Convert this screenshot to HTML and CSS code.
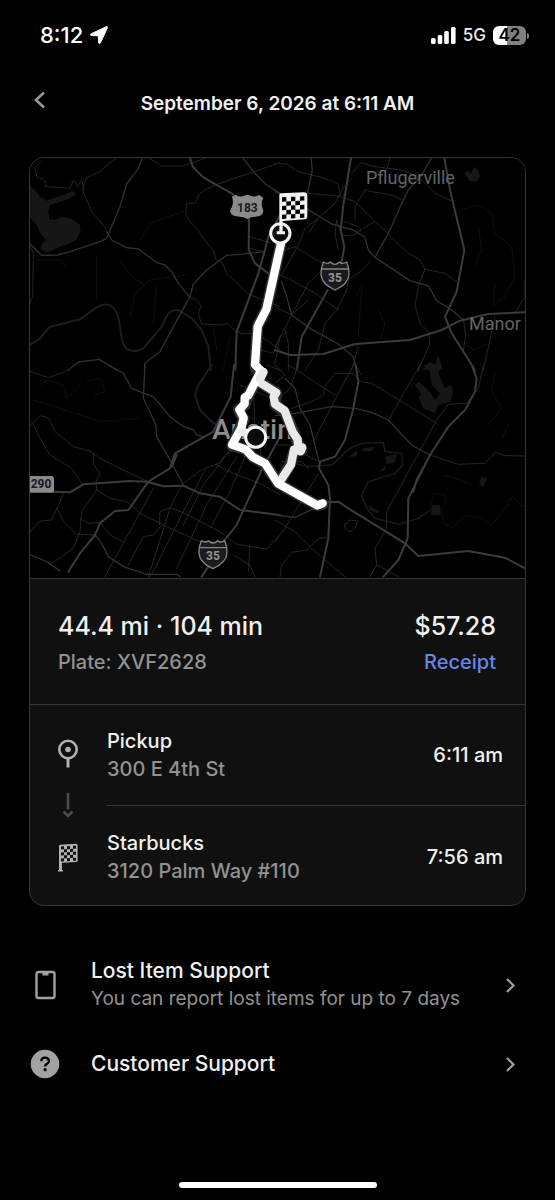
FILE: index.html
```html
<!DOCTYPE html>
<html lang="en">
<head>
<meta charset="utf-8">
<meta name="viewport" content="width=device-width, initial-scale=1">
<title>Ride details</title>
<link rel="stylesheet" href="styles.css">
</head>
<body>
<div class="screen">
  <div class="status">
    <div class="status-group">
      <span class="clock">8:12</span>
      <svg class="locate" viewBox="0 0 18 18" aria-hidden="true"><path d="M16.300 .7 1 7.900c-.9.4-.8 1.500.2 1.600l7 .3.5 7c.1 1 1.300 1.100 1.700.2L17.400 1.800c.3-.8-.3-1.400-1.100-1.100z" fill="#fff" stroke="#fff"/></svg>
    </div>
    <div class="status-group">
      <svg class="signal" viewBox="0 0 25 17" aria-hidden="true" fill="#fff"><rect y="11" width="4.600" height="6" rx="1.500"/><rect x="6.700" y="8" width="4.600" height="9" rx="1.500"/><rect x="13.200" y="4" width="4.600" height="13" rx="1.500"/><rect x="20" width="4.600" height="17" rx="1.500"/></svg>
      <span class="network">5G</span>
      <span class="battery">42</span>
    </div>
  </div>

  <header class="topbar">
    <button class="back" type="button" aria-label="Back"><svg viewBox="0 0 12 18" aria-hidden="true"><path d="M10 1.500 2 9l8 7.500" fill="none" stroke="#98989a" stroke-width="2.600"/></svg></button>
    <h1 class="title">September 6, 2026 at 6:11 AM</h1>
  </header>

  <main>
    <section class="card">
      <svg class="map" viewBox="0 0 1485 1260" role="img" aria-label="Route map of Austin">
        <g transform="translate(-30 -24)">
          <path class="water" d="M28 108 45 120 60 140 80 152 100 145 130 135 160 122 168 132 150 145 110 158 90 165 85 185 88 208 105 210 125 200 155 206 180 225 182 245 168 270 145 282 120 290 100 300 82 308 62 298 66 282 78 270 62 250 50 225 28 200z"/>
          <path class="river" d="M28 585 60 565 90 530 180 508 230 472C270 450 290 475 297 510L305 565C312 610 350 610 375 590L425 530C440 495 445 480 475 480L515 505 545 540 565 590 572 660"/>
          <path class="minor" d="M62 36 45 55 50 80 72 88 78 110 150 115 160 90 172 110 186 90 192 130 M186 120 200 82 240 65 270 38 292 23M192 130 215 185 260 238M385 23 425 48 490 48 560 23M555 120 585 105 780 38M555 120 535 135 528 158 500 160 497 190 508 212 530 235 565 285 580 300 588 330 605 335 620 370 685 432 780 470M505 440 530 450 543 468 535 490 545 522 610 525 622 520 648 545 665 552 700 550 740 570 780 600M688 260 750 278M690 295 730 305M665 552 650 540M28 285 40 310 38 440 28 465M720 600 760 610 775 570"/>
          <path class="faint" d="M230 320V450M300 330 340 385 370 400M330 500 345 430 390 390 500 375M360 270 390 220 500 180M580 520 590 600M610 660 630 560M40 330 120 330 140 350M400 520 410 410"/>
          <path class="mid" d="M367 23 355 55 320 102 300 170 260 265 240 275 150 305 115 315 65 316 28 280M260 245 275 270 320 293 355 297 410 338 435 345 455 365 475 400 508 440M145 660 175 636 238 628 290 660M668 23 700 65 740 105 780 130M374 660V640L420 605 460 530 510 440 520 402 560 360 620 316 690 310 735 305"/>
          <path class="major" d="M510 23 518 50 550 82 640 133M687 200 686 300 705 340 745 370M780 195 745 260 735 300 715 370 650 545 646 660"/>
        </g>
        <g transform="translate(735 -24)">
          <path class="water" d="M568 70 580 62 586 72 600 50 612 65 615 80 605 95 585 93zM440 660 465 635 480 645 490 615 503 660z"/>
          <path class="faint" d="M530 200 555 180 610 165 650 190 660 250 710 290 720 380 690 440 655 465 660 400M610 230 620 300 600 350M240 440 260 410 250 560M310 480 330 520 315 570M520 560 600 600 640 580"/>
          <path class="minor" d="M0 40 35 42 70 65 150 85 190 102 195 130 180 160 130 205 90 235 70 285 20 375M230 70 258 38 300 50 380 60 430 80 480 130 528 152M345 23 335 60M95 130 190 138 240 155 300 215 350 262 400 310 435 330 450 358 510 370 545 395M190 145 205 112 230 85M210 215 250 230 260 240 230 258 200 255 185 210 180 250 190 300M300 215 265 235M380 150 350 135 290 125 270 120 240 170 240 210M0 310 60 290 150 345M0 370 40 385 120 430 190 480M130 205 100 250M285 335 255 365 220 390 215 420 185 480 150 520 130 600 90 660M450 358 432 402 420 465 435 520 460 545 465 580 430 660M0 590 100 400 140 360M0 470 50 495 100 450M565 505 572 560 565 600M660 500 625 660M750 390 750 440 722 485M0 640 15 560 40 545M30 540 40 580 40 660M250 590 230 660"/>
          <path class="mid" d="M108 23 112 60 98 128M0 125 30 140 110 185 170 222 235 240 270 262 280 300 300 322 405 392 460 408 485 452 530 480 565 510M470 23 440 75 400 120 380 160 345 240 300 322M20 395 35 440 50 495 105 535 190 582 235 620 245 660"/>
          <path class="major" d="M228 23 205 165 197 240 208 290 200 335M158 420 80 560 65 660M508 23 525 120 568 300 545 425 510 500 530 550 600 660M0 600 45 615 145 612 240 582 405 570 500 540 555 512 640 492 750 487"/>
        </g>
        <g transform="translate(-30 621)">
          <path class="river" d="M575 0 535 60 525 90 540 135 575 170 600 185"/>
          <path class="faint" d="M60 70 80 45 130 60 140 100 180 60M200 50 240 40 255 80 225 90M40 105 150 140 240 170 360 160"/>
          <path class="minor" d="M28 18 85 38 130 22 165 0M28 185 60 152 85 158 105 200 160 245 210 258 240 280 330 325 385 350M35 170 60 220 90 270 155 310 185 355M220 265 222 300 240 325 228 350 230 375 185 440 180 500 160 550 95 595M130 385 112 430 130 470 170 508 225 510M30 500 60 468 95 465 110 430M230 375 270 400 320 410 360 445 430 480 540 530 580 530M180 460 205 475 240 472 270 510 310 530M418 480 420 440 450 428 495 445 600 500 650 538 740 552 780 510M400 370 255 635M480 370 450 430 385 635M555 315 500 420 410 600 390 635M650 275 560 420 470 610M675 275 630 380 570 490M630 255 550 360 490 480M585 298 640 325 720 355 780 390M490 355 545 315 595 295 630 255M640 570 690 600 705 635M690 540 685 620M640 130 700 160M700 80 705 180M660 60 780 110M370 515 325 600M370 515 400 510 425 480M740 0 780 15M720 240 725 300"/>
          <path class="mid" d="M265 0 310 25 335 70 365 82 400 95 450 155 490 185 520 195 530 210 550 215M375 0 370 100 408 180 410 215 450 285 490 360M28 568 80 590 120 618M225 510 245 535 265 575 310 605 380 628 470 628 480 635"/>
          <path class="major" d="M145 620 180 565 225 510 240 475 285 438 325 435 385 350 450 310 465 265 580 200 632 95 642 0M455 305 470 270M95 380 150 382 190 358 330 348 380 350 430 364 490 362 540 385 600 395 660 435 780 450M780 215 725 315 650 480 610 530M545 635 565 605"/>
        </g>
        <g transform="translate(735 621)">
          <path class="water" d="M445 0 500 0 490 25 510 70 530 60 535 85 525 110 490 120 480 145 445 130 430 95 440 90 420 60 430 50 460 75 480 105 495 85 470 60 465 20zM330 275 365 268 360 292 335 298zM310 320 335 300 330 315zM220 275 248 255 245 275zM262 250 300 245 290 258 265 260zM280 420 315 440 305 445 285 435zM470 420 495 420 498 450 468 450zM620 335 635 340 625 368 612 355z"/>
          <path class="river thin" d="M60 295 100 305 170 300 225 250 260 235 325 232 330 260 380 265 383 300 360 325 280 350 260 390 275 430 300 460 370 478 430 460 465 435"/>
          <path class="faint" d="M465 430 475 385 510 390 512 420 500 430 505 475 530 488 575 450 620 460 650 480 700 420 695 410 715 395 735 420 752 425M640 180 680 130 650 80 660 20M500 330 560 345 590 360M700 180 680 220"/>
          <path class="minor" d="M0 110 45 70 70 0M40 0 180 90M0 0 30 30 0 55M180 25 235 25 255 50 290 55 485 175M435 0 340 165M435 0 430 20M235 0 130 200 115 230M485 165 520 118 575 115 610 70 625 0M485 165 335 440 335 490 300 550 305 600 285 635M305 600 370 635M180 25 150 65 145 90 110 110 50 130M240 0 260 30M0 465 60 500 120 560 210 635M155 518 130 520 95 555 50 562 20 600 15 635M0 530 30 490 130 325M210 480 225 465 248 468 240 490 225 500 210 490V475M0 240 40 240 130 290M20 290 80 290 100 310M465 270 550 298 630 295 660 262 690 272 750 273"/>
          <path class="mid" d="M0 152 60 145 170 125 240 130 290 142 340 165 410 240 465 270M30 40 60 70 75 130 105 180 132 290M0 450 60 457 130 425"/>
          <path class="major" d="M242 0 250 50 235 130 210 225 180 275 135 290 132 310 160 360 165 400 160 520 135 635M590 0 605 40 600 80 570 135 520 185 465 270 400 400 398 520 370 585 325 635M465 270 425 345 415 380M150 412 190 410 220 430 390 535 430 573 580 558 690 578 750 610"/>
        </g>
        <g class="place">
          <text class="town" x="1008" y="78">Pflugerville</text>
          <text class="town" x="1317" y="516">Manor</text>
          <text class="city" x="547" y="843">Austin</text>
        </g>
        <g transform="translate(510 66)">
          <path class="shield" d="M96 50 107 44Q118 52 127 49L142 44 157 49Q166 52 177 44L190 54Q180 70 190 90 190 106 175 109L154 112 142 117 130 112 109 109Q92 106 90 92 104 72 96 50z"/>
          <text class="shield-dark" x="142" y="96">183</text>
        </g>
        <g transform="translate(915 350)">
          <path class="interstate" d="M-35-38Q-22-30-14-38 0-24 14-38 22-30 35-38 43-20 42 0 40 28 0 46-40 28-42 0-43-20-35-38zM-41-17H41"/>
          <text class="shield-light" y="21">35</text>
        </g>
        <g transform="translate(549 1186)">
          <path class="interstate" d="M-35-38Q-22-30-14-38 0-24 14-38 22-30 35-38 43-20 42 0 40 28 0 46-40 28-42 0-43-20-35-38zM-41-17H41"/>
          <text class="shield-light" y="21">35</text>
        </g>
        <path class="shield" d="M0 954H64Q72 954 72 962V996Q72 1004 64 1004H0z"/>
        <text class="shield-dark" x="33" y="991">290</text>

        <g class="route">
          <path class="casing" d="M753 256 709 454 683 505 675 620 677 632 693 644 655 712 644 742 626 755 641 785 606 864 647 874 668 897 706 917 735 962 745 977 862 1042 878 1038"/>
          <path class="casing" d="M696 644 686 671 739 704 735 740 764 762 790 820 800 846 815 877 792 880 780 920 748 975"/>
          <path class="leg-late" d="M700 642 686 671 739 704 731 716 735 738 764 758 788 822 803 844 804 871M813 878 792 875 783 920 748 973"/>
          <path class="leg" d="M753 256 709 454 683 505 675 620 693 638 655 712 644 718 644 737 628 755 641 780 634 810 606 860 647 874 668 897 706 917 735 962 745 977 862 1042 878 1036"/>
          <path class="leg-late" d="M700 642 690 662M806 868 817 868 811 880"/>
          <path class="leg-late" d="M637 822 662 826"/>
          <circle class="stop" cx="677" cy="838" r="30"/>
          <circle class="stop" cx="751" cy="226" r="29"/>
          <path d="M748 110Q748 106 754 106L822 103Q831 103 832 111L832 174Q832 183 824 184L758 189V220H765V229H740V220H748z" fill="#f1f1f1"/>
          <g fill="#000" transform="translate(756 116) skewY(-3)">
            <path d="M0 2H13V15H0zM27 2H40V15H27zM54 2H67V15H54zM13 15H27V28H13zM40 15H54V28H40zM0 28H13V41H0zM27 28H40V41H27zM54 28H67V41H54zM13 41H27V54H13zM40 41H54V54H40zM0 54H13V67H0zM27 54H40V67H27zM54 54H67V67H54z"/>
          </g>
        </g>
      </svg>

      <div class="summary">
        <div>
          <p class="figure">44.4 mi · 104 min</p>
          <p class="detail">Plate: XVF2628</p>
        </div>
        <div class="fare">
          <p class="figure">$57.28</p>
          <a class="receipt" href="#receipt">Receipt</a>
        </div>
      </div>

      <div class="stops">
        <div class="rail" aria-hidden="true">
          <svg width="20" height="29" viewBox="0 0 20 29"><circle cx="10" cy="10.500" r="8.700" fill="none" stroke="#b0b0b0" stroke-width="2.600"/><circle cx="10" cy="10.500" r="2.800" fill="#b0b0b0"/><path d="M10 19v9.500" stroke="#b0b0b0" stroke-width="3"/></svg>
          <svg width="20" height="25" viewBox="0 0 20 25"><path d="M10 0v16.500M5.500 18.500 10 23l4.500-4.500" fill="none" stroke="#4c4c4c" stroke-width="2.600"/></svg>
          <svg width="20" height="29" viewBox="0 0 20 29"><path d="M1 3.200Q1 2 2.200 1.800L18 .8q1.600 0 1.600 1.600v15q0 1.400-1.400 1.500L4 19.800v7.200h1v1.500H0V27h1z" fill="#b0b0b0"/><path fill="#101010" transform="translate(3 3.500) skewY(-3)" d="M0 0h3v3H0zM6 0h3v3H6zM12 0h3v3h-3zM3 3h3v3H3zM9 3h3v3H9zM0 6h3v3H0zM6 6h3v3H6zM12 6h3v3h-3zM3 9h3v3H3zM9 9h3v3H9zM0 12h3v3H0zM6 12h3v3H6zM12 12h3v3h-3z"/></svg>
        </div>
        <ol class="stop-list">
          <li class="stop-row"><div><p class="name">Pickup</p><p class="address">300 E 4th St</p></div><time class="time">6:11 am</time></li>
          <li class="stop-row"><div><p class="name">Starbucks</p><p class="address">3120 Palm Way #110</p></div><time class="time">7:56 am</time></li>
        </ol>
      </div>
    </section>

    <nav class="support">
      <a class="support-row" href="#lost">
        <svg class="support-icon" viewBox="0 0 30 30" aria-hidden="true"><rect x="6.500" y="2" width="18" height="26" rx="2" fill="none" stroke="#a2a2a2" stroke-width="2.400"/><path d="M12.500 2h6v3.500h-6z" fill="#a2a2a2"/></svg>
        <span class="support-text"><span class="support-name">Lost Item Support</span><span class="support-note">You can report lost items for up to 7 days</span></span>
        <svg class="chevron" viewBox="0 0 9 15" aria-hidden="true"><path d="m1 1 6.500 6.500L1 14" fill="none" stroke="#a2a2a2" stroke-width="2.200"/></svg>
      </a>
      <a class="support-row" href="#help">
        <svg class="support-icon" viewBox="0 0 30 30" aria-hidden="true"><circle cx="15" cy="15" r="14.300" fill="#a2a2a2"/><path d="M11.300 12.200c0-4.600 7.600-4.700 7.600-.3 0 2.800-3.800 2.900-3.800 5.600" fill="none" stroke="#000" stroke-width="2.400"/><circle cx="15.100" cy="20.700" r="1.600"/></svg>
        <span class="support-text"><span class="support-name">Customer Support</span></span>
        <svg class="chevron" viewBox="0 0 9 15" aria-hidden="true"><path d="m1 1 6.500 6.500L1 14" fill="none" stroke="#a2a2a2" stroke-width="2.200"/></svg>
      </a>
    </nav>
  </main>
  <div class="home"></div>
</div>
</body>
</html>
```
FILE: styles.css
```css
* { box-sizing: border-box; }
body {
  margin: 0;
  background: #000;
  color: #f0f0f0;
  font-family: Inter, "Liberation Sans", sans-serif;
}
p, h1, ol { margin: 0; padding: 0; }
a { color: inherit; text-decoration: none; }
svg { display: block; flex: none; }

.screen {
  min-height: 100vh;
  display: flex;
  flex-direction: column;
}
.status {
  display: flex;
  justify-content: space-between;
  padding: 23px 29px 0 40px;
  height: 72px;
}
.status-group {
  display: flex;
  align-items: center;
  gap: 7px;
  height: 24px;
}
.clock { font-size: 22px; font-weight: 500; color: #fff; }
.locate { width: 18px; height: 18px; }
.signal { width: 25px; height: 17px; }
.network { font-size: 17px; font-weight: 500; color: #f0f0f0; }
.battery {
  position: relative;
  width: 33px;
  height: 19px;
  border-radius: 6px;
  background: linear-gradient(90deg, #fff 42%, #808080 42%);
  color: #000;
  font-size: 17px;
  font-weight: 600;
  line-height: 19px;
  text-align: center;
}
.battery::after {
  content: "";
  position: absolute;
  left: 34px;
  top: 7px;
  width: 2px;
  height: 6px;
  border-radius: 0 2px 2px 0;
  background: #808080;
}

.topbar {
  display: grid;
  grid-template-columns: 32px 1fr 32px;
  align-items: center;
  height: 60px;
  padding: 0 24px;
}
.back {
  display: flex;
  justify-content: center;
  padding: 0 0 4px;
  border: 0;
  background: none;
}
.back svg { width: 12px; height: 18px; }
.title {
  padding-top: 3px;
  font-size: 19px;
  font-weight: 600;
  line-height: 24px;
  text-align: center;
}

.card {
  margin: 25px 29px 0;
  border: 1px solid #363636;
  border-radius: 15px;
  background: #101010;
  overflow: hidden;
}
.map { width: 100%; height: auto; background: #000; }
.map path { stroke-linejoin: round; stroke-linecap: round; }
.map .water { fill: #161616; }
.map .river { fill: none; stroke: #1d1d1d; stroke-width: 6; }
.map .river.thin { stroke-width: 4; }
.map .faint { fill: none; stroke: #111; stroke-width: 3; }
.map .minor { fill: none; stroke: #262626; stroke-width: 3; }
.map .mid { fill: none; stroke: #303030; stroke-width: 4; }
.map .major { fill: none; stroke: #3b3b3b; stroke-width: 6; }
.place { font-family: Roboto, "Liberation Sans", sans-serif; fill: #646464; }
.town { font-size: 54px; }
.city { font-size: 84px; font-weight: 500; fill: #8c8c8c; }
.shield { fill: #8a8a8c; }
.interstate { fill: #1a1b1e; stroke: #858585; stroke-width: 4; }
.shield-dark, .shield-light {
  font-family: Roboto, "Liberation Sans", sans-serif;
  font-size: 36px;
  font-weight: 700;
  text-anchor: middle;
}
.shield-dark { fill: #18191c; }
.shield-light { fill: #949494; }
.route path { stroke-linecap: round; }
.casing { fill: none; stroke: #303030; stroke-width: 34; }
.leg, .leg-late { fill: none; stroke: #fff; stroke-width: 25; }
.leg-late { stroke: #e9e9e9; }
.stop { fill: #0b0b0b; stroke: #f4f4f4; stroke-width: 9; }

.summary {
  display: flex;
  justify-content: space-between;
  padding: 31px 29px 30px 28px;
  border-top: 1px solid #363636;
}
.figure { font-size: 25px; font-weight: 500; line-height: 32px; }
.detail, .receipt {
  display: block;
  margin-top: 8px;
  font-size: 20px;
  font-weight: 500;
  line-height: 24px;
}
.detail { color: #929292; }
.fare { text-align: right; }
.receipt { color: #6488e4; }

.stops {
  display: flex;
  border-top: 1px solid #363636;
}
.rail {
  display: flex;
  flex-direction: column;
  justify-content: center;
  gap: 25px;
  padding: 0 29px 0 28px;
}
.stop-list { flex: 1; list-style: none; }
.stop-row {
  display: flex;
  justify-content: space-between;
  align-items: center;
  height: 100px;
  padding-right: 22px;
}
.stop-row + .stop-row { border-top: 1px solid #363636; padding-top: 3px; }
.name, .address, .time { font-size: 20px; font-weight: 500; line-height: 28px; }
.address { color: #929292; }

.support {
  display: flex;
  flex-direction: column;
  gap: 36px;
  padding: 51px 40px 0 30px;
}
.support-row { display: flex; align-items: center; }
.support-icon { width: 30px; height: 30px; }
.support-text { flex: 1; padding-left: 31px; }
.support-name, .support-note { display: block; line-height: 28px; }
.support-name { font-size: 21px; font-weight: 500; }
.support-note { font-size: 19px; color: #929292; }
.chevron { width: 9px; height: 15px; }
.home {
  width: 198px;
  height: 6px;
  margin: auto auto 12px;
  border-radius: 3px;
  background: #fff;
}
```
